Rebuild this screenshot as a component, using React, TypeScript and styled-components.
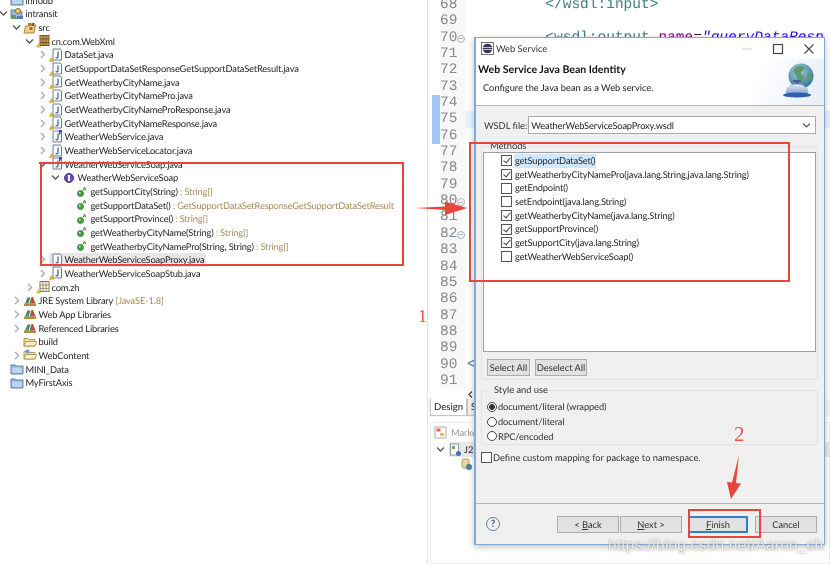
import React from 'react';
import styled, { createGlobalStyle } from 'styled-components';

const GlobalStyle = createGlobalStyle`
    html, body {
        margin: 0;
        padding: 0;
        background: #fff;
    }
`;

const UI_FONT = `Lato, "Open Sans", "Liberation Sans", sans-serif`;
const MONO_FONT = `"Liberation Mono", monospace`;

type IconKind = 'project' | 'src' | 'pkg' | 'pkgEmpty' | 'java' | 'javaWarn' | 'javaMark' | 'iface' | 'method' | 'lib' | 'folder' | 'folderDeco' | 'bluefolder';

type TreeItem = {
    depth: number;
    arrow?: 'open' | 'closed';
    icon: IconKind;
    label: string;
    suffix?: string;
    selected?: boolean;
};

const TREE: TreeItem[] = [
    { depth: 0, icon: 'bluefolder', label: 'innodb' },
    { depth: 0, arrow: 'open', icon: 'project', label: 'intransit' },
    { depth: 1, arrow: 'open', icon: 'src', label: 'src' },
    { depth: 2, arrow: 'open', icon: 'pkg', label: 'cn.com.WebXml' },
    { depth: 3, arrow: 'closed', icon: 'javaWarn', label: 'DataSet.java' },
    { depth: 3, arrow: 'closed', icon: 'javaWarn', label: 'GetSupportDataSetResponseGetSupportDataSetResult.java' },
    { depth: 3, arrow: 'closed', icon: 'javaWarn', label: 'GetWeatherbyCityName.java' },
    { depth: 3, arrow: 'closed', icon: 'javaWarn', label: 'GetWeatherbyCityNamePro.java' },
    { depth: 3, arrow: 'closed', icon: 'javaWarn', label: 'GetWeatherbyCityNameProResponse.java' },
    { depth: 3, arrow: 'closed', icon: 'javaWarn', label: 'GetWeatherbyCityNameResponse.java' },
    { depth: 3, arrow: 'closed', icon: 'javaMark', label: 'WeatherWebService.java' },
    { depth: 3, arrow: 'closed', icon: 'javaWarn', label: 'WeatherWebServiceLocator.java' },
    { depth: 3, arrow: 'open', icon: 'javaMark', label: 'WeatherWebServiceSoap.java' },
    { depth: 4, arrow: 'open', icon: 'iface', label: 'WeatherWebServiceSoap' },
    { depth: 5, icon: 'method', label: 'getSupportCity(String)', suffix: ' : String[]' },
    { depth: 5, icon: 'method', label: 'getSupportDataSet()', suffix: ' : GetSupportDataSetResponseGetSupportDataSetResult' },
    { depth: 5, icon: 'method', label: 'getSupportProvince()', suffix: ' : String[]' },
    { depth: 5, icon: 'method', label: 'getWeatherbyCityName(String)', suffix: ' : String[]' },
    { depth: 5, icon: 'method', label: 'getWeatherbyCityNamePro(String, String)', suffix: ' : String[]' },
    { depth: 3, arrow: 'closed', icon: 'java', label: 'WeatherWebServiceSoapProxy.java', selected: true },
    { depth: 3, arrow: 'closed', icon: 'javaWarn', label: 'WeatherWebServiceSoapStub.java' },
    { depth: 2, arrow: 'closed', icon: 'pkgEmpty', label: 'com.zh' },
    { depth: 1, arrow: 'closed', icon: 'lib', label: 'JRE System Library', suffix: ' [JavaSE-1.8]' },
    { depth: 1, arrow: 'closed', icon: 'lib', label: 'Web App Libraries' },
    { depth: 1, arrow: 'closed', icon: 'lib', label: 'Referenced Libraries' },
    { depth: 1, icon: 'folder', label: 'build' },
    { depth: 1, arrow: 'closed', icon: 'folderDeco', label: 'WebContent' },
    { depth: 0, icon: 'bluefolder', label: 'MINI_Data' },
    { depth: 0, icon: 'bluefolder', label: 'MyFirstAxis' },
];

const METHODS = [
    { label: 'getSupportDataSet()', checked: true, active: true },
    { label: 'getWeatherbyCityNamePro(java.lang.String,java.lang.String)', checked: true },
    { label: 'getEndpoint()', checked: false },
    { label: 'setEndpoint(java.lang.String)', checked: false },
    { label: 'getWeatherbyCityName(java.lang.String)', checked: true },
    { label: 'getSupportProvince()', checked: true },
    { label: 'getSupportCity(java.lang.String)', checked: true },
    { label: 'getWeatherWebServiceSoap()', checked: false },
];

const LINE_NUMBERS = Array.from({ length: 24 }, (_, i) => 68 + i);
const FOLD_LINES = [70, 80, 82];
const CHANGED_LINES = [74, 75, 76];

const TreeIcon = ({ kind }: { kind: IconKind }) => {
    switch (kind) {
        case 'project':
            return (
                <svg width="14" height="14" viewBox="0 0 14 14">
                    <path d="M1 3h5l1 1.500h5v7H1z" fill="#9fb9d6" stroke="#5c7fa6" />
                    <circle cx="8" cy="4" r="2.600" fill="#e6c35c" stroke="#8a7a40" />
                    <rect x="1" y="8" width="5" height="4" fill="#6d9a5c" />
                    <rect x="7" y="9" width="6" height="3" fill="#4f7fb8" />
                </svg>
            );
        case 'src':
            return (
                <svg width="14" height="14" viewBox="0 0 14 14">
                    <path d="M1 12l1.500-7h4l1-1h5l-1.500 8z" fill="#f0d08a" stroke="#b08a3e" />
                    <rect x="5" y="2" width="3" height="3" fill="#b5762e" />
                    <rect x="8.500" y="2" width="3" height="3" fill="#8a5a2a" />
                    <rect x="6.500" y="6" width="3" height="3" fill="#a86b2c" />
                </svg>
            );
        case 'pkg':
            return (
                <svg width="14" height="14" viewBox="0 0 14 14">
                    <rect x="4" y="1.500" width="9" height="10" fill="#c89a58" stroke="#7a5a2a" />
                    <path d="M4 5h9M4 8.500h9M7 1.500v10M10 1.500v10" stroke="#6b4a20" strokeWidth="0.800" />
                    <path d="M2.500 9l2.500 4.500H0z" fill="#e8b93a" />
                </svg>
            );
        case 'pkgEmpty':
            return (
                <svg width="14" height="14" viewBox="0 0 14 14">
                    <rect x="4" y="1.500" width="9" height="10" fill="#f4f1e6" stroke="#8a7a55" />
                    <path d="M4 5h9M4 8.500h9M7 1.500v10M10 1.500v10" stroke="#9a8a60" strokeWidth="0.800" />
                    <path d="M2.500 9l2.500 4.500H0z" fill="#e8b93a" />
                </svg>
            );
        case 'java':
        case 'javaWarn':
        case 'javaMark':
            return (
                <svg width="14" height="14" viewBox="0 0 14 14">
                    <path d="M4 1h7l1.500 1.500V12H4z" fill="#fdfdfd" stroke="#6d7f94" />
                    <path d="M9 3.500v5.300c0 1.300-1.800 1.300-2.300.4" fill="none" stroke="#3d5f96" strokeWidth="1.200" />
                    {kind === 'javaWarn' && <path d="M2.500 9l2.700 4.800H-.2z" fill="#e2ac2c" />}
                    {kind === 'javaMark' && <path d="M10 0h3v2.500h-1.600v2H10z" fill="#4a3fb0" />}
                </svg>
            );
        case 'iface':
            return (
                <svg width="14" height="14" viewBox="0 0 14 14">
                    <circle cx="7" cy="7" r="4.500" fill="#6a4fb0" stroke="#4a3490" />
                    <rect x="6" y="4" width="2" height="6" fill="#fff" />
                </svg>
            );
        case 'method':
            return (
                <svg width="14" height="14" viewBox="0 0 14 14">
                    <circle cx="5.500" cy="8.500" r="3" fill="#45a045" stroke="#2c7a2c" strokeWidth="0.800" />
                    <circle cx="4.700" cy="7.700" r="0.900" fill="#cfeccc" />
                    <path d="M9.500 2l1.500 3.500M9.500 2L8 5.500M8.500 4.200h2" stroke="#4a6a3a" strokeWidth="0.800" fill="none" />
                </svg>
            );
        case 'lib':
            return (
                <svg width="14" height="14" viewBox="0 0 14 14">
                    <rect x="1" y="9.500" width="12" height="2.500" fill="#b88a3c" />
                    <path d="M2 9.500l2.500-6h3l-2 6z" fill="#3f8a6b" />
                    <path d="M6.500 9.500l2-6.500h1.500l2.500 6.500z" fill="#b2533e" />
                </svg>
            );
        case 'folder':
        case 'folderDeco':
            return (
                <svg width="14" height="14" viewBox="0 0 14 14">
                    <path d="M1 3.500h4l1 1h6v6.500H1z" fill="#f1dca2" stroke="#b49a5c" />
                    <path d="M1 11l1.800-4.500H13.500L12 11z" fill="#fbeec6" stroke="#b49a5c" />
                    {kind === 'folderDeco' && <circle cx="4.500" cy="3.500" r="2" fill="#5a9ad0" />}
                </svg>
            );
        case 'bluefolder':
            return (
                <svg width="14" height="14" viewBox="0 0 14 14">
                    <path d="M1 3h4l1 1h7v8H1z" fill="#8fb6de" stroke="#5f86ae" />
                    <rect x="2" y="5.500" width="10" height="5.500" fill="#bcd6ef" />
                </svg>
            );
    }
};

const Chevron = ({ open }: { open: boolean }) => (
    <svg width="9" height="9" viewBox="0 0 9 9">
        {open
            ? <path d="M1 2.500l3.500 3.500L8 2.500" fill="none" stroke="#555" strokeWidth="1.300" />
            : <path d="M3 1l3.500 3.500L3 8" fill="none" stroke="#a8a8a8" strokeWidth="1.300" />}
    </svg>
);

const GlobeBell = () => (
    <svg width="34" height="36" viewBox="0 0 34 36">
        <defs>
            <radialGradient id="sea" cx="40%" cy="30%" r="75%">
                <stop offset="0" stopColor="#a8d0e0" />
                <stop offset="1" stopColor="#2f6f94" />
            </radialGradient>
            <linearGradient id="bell" x1="0" y1="0" x2="0" y2="1">
                <stop offset="0" stopColor="#e6eef8" />
                <stop offset="1" stopColor="#7fa0d0" />
            </linearGradient>
        </defs>
        <circle cx="20" cy="13" r="12.500" fill="url(#sea)" />
        <path d="M14 5c4-3 8-2 10 0-1 3-4 2-4 5s3 2 3 5-4 5-6 3 0-4-2-6-4-3-1-7zM27 10c2 0 4 3 4 6l-3 2c-2-3-3-6-1-8z" fill="#5f9a6a" />
        <path d="M12 17h8v2h-2.500v2.500h-3V19H12z" fill="#44618f" />
        <path d="M5 31c0-7 5-10 11-10s11 3 11 10z" fill="url(#bell)" stroke="#7f9ccb" strokeWidth="0.600" />
        <ellipse cx="16" cy="32" rx="14" ry="2.500" fill="#2f5faa" />
    </svg>
);

const EclipseLogo = () => (
    <svg width="13" height="13" viewBox="0 0 13 13">
        <rect x="0.500" y="0.500" width="12" height="12" fill="#fff" stroke="#777" />
        <circle cx="6.500" cy="6.500" r="4.800" fill="#3a3560" />
        <path d="M2 5.500h9M2 7.500h9" stroke="#fff" strokeWidth="0.700" />
    </svg>
);

const App = () => {
    return (
        <Screen>
            <GlobalStyle />
            <TreePane>
                {TREE.map(item => (
                    <TreeRow key={item.label} depth={item.depth}>
                        <ArrowSlot>
                            {item.arrow && <Chevron open={item.arrow === 'open'} />}
                        </ArrowSlot>
                        <TreeEntry selected={!!item.selected}>
                            <IconSlot><TreeIcon kind={item.icon} /></IconSlot>
                            <TreeLabel>{item.label}</TreeLabel>
                            {item.suffix && <TreeSuffix>{item.suffix}</TreeSuffix>}
                        </TreeEntry>
                    </TreeRow>
                ))}
            </TreePane>

            <EditorPane>
                <EditorLines>
                    {LINE_NUMBERS.map(n => (
                        <EditorLine key={n}>
                            <ChangeBar changed={CHANGED_LINES.includes(n)} />
                            <LineNumber>
                                {n}
                                {FOLD_LINES.includes(n) && <FoldMark />}
                            </LineNumber>
                            <LineCode current={n === 75}>
                                {n === 68 && <CodeIndent indent={9}><Tag>&lt;/wsdl:input&gt;</Tag></CodeIndent>}
                                {n === 70 && (
                                    <CodeIndent indent={9}>
                                        <Tag>&lt;wsdl:output</Tag> <Attr>name</Attr>=<AttrValue>"queryDataResp</AttrValue>
                                    </CodeIndent>
                                )}
                                {n === 90 && <CodeIndent indent={0}><Tag>&lt;</Tag></CodeIndent>}
                            </LineCode>
                        </EditorLine>
                    ))}
                </EditorLines>
                <ScrollRow>
                    <svg width="5" height="7" viewBox="0 0 5 7">
                        <path d="M4 .5L1 3.500 4 6.500" fill="none" stroke="#444" strokeWidth="1.300" />
                    </svg>
                </ScrollRow>
                <TabStrip>
                    <EditorTab active>Design</EditorTab>
                    <EditorTab>Se</EditorTab>
                </TabStrip>
                <MarkersView>
                    <MarkersTitle>
                        <svg width="13" height="13" viewBox="0 0 13 13">
                            <rect x="1" y="1" width="11" height="11" fill="#fff" stroke="#a9a9a9" />
                            <rect x="2.500" y="2.500" width="4" height="3" fill="#d96a5c" />
                            <rect x="6" y="7" width="4" height="3" fill="#e6c35c" />
                        </svg>
                        Marke
                    </MarkersTitle>
                    <MarkerRow>
                        <Chevron open />
                        <MarkerEntry>
                            <svg width="13" height="14" viewBox="0 0 13 14">
                                <rect x="1.500" y="1" width="8" height="11" fill="#fff" stroke="#8a9aa8" />
                                <rect x="3" y="3" width="3" height="3" fill="#6aa84f" />
                                <circle cx="9.500" cy="10.500" r="2.500" fill="#3f74b5" />
                            </svg>
                            J2E
                        </MarkerEntry>
                    </MarkerRow>
                    <MarkerChild>
                        <svg width="13" height="14" viewBox="0 0 13 14">
                            <rect x="2" y="2" width="7" height="9" rx="2" fill="#e8d9a0" stroke="#a89a60" />
                            <circle cx="9" cy="10" r="3" fill="#4a7fa8" />
                        </svg>
                    </MarkerChild>
                </MarkersView>
            </EditorPane>

            <Dialog>
                <TitleBar>
                    <EclipseLogo />
                    <TitleText>Web Service</TitleText>
                    <WindowControls>
                        <svg width="12" height="12" viewBox="0 0 12 12"><path d="M1 6h10" stroke="#cfcfcf" /></svg>
                        <svg width="12" height="12" viewBox="0 0 12 12"><rect x="1.500" y="1.500" width="9" height="9" fill="none" stroke="#444" strokeWidth="1.200" /></svg>
                        <svg width="12" height="12" viewBox="0 0 12 12"><path d="M1.500 1.500l9 9M10.500 1.500l-9 9" stroke="#444" strokeWidth="1.100" /></svg>
                    </WindowControls>
                </TitleBar>
                <BannerHeader>
                    <div>
                        <BannerTitle>Web Service Java Bean Identity</BannerTitle>
                        <BannerText>Configure the Java bean as a Web service.</BannerText>
                    </div>
                    <GlobeBell />
                </BannerHeader>
                <DialogBody>
                    <WsdlRow>
                        <span>WSDL file:</span>
                        <ComboBox>
                            WeatherWebServiceSoapProxy.wsdl
                            <svg width="9" height="9" viewBox="0 0 9 9">
                                <path d="M1 2.500l3.500 3.500L8 2.500" fill="none" stroke="#555" strokeWidth="1.100" />
                            </svg>
                        </ComboBox>
                    </WsdlRow>
                    <MethodsGroup>
                        <GroupLegend>Methods</GroupLegend>
                        <MethodList>
                            {METHODS.map(m => (
                                <MethodRow key={m.label}>
                                    <CheckBox checked={m.checked} />
                                    <MethodLabel active={!!m.active}>{m.label}</MethodLabel>
                                </MethodRow>
                            ))}
                        </MethodList>
                        <GroupButtons>
                            <SmallButton wide={false}>Select All</SmallButton>
                            <SmallButton wide>Deselect All</SmallButton>
                        </GroupButtons>
                    </MethodsGroup>
                    <StyleGroup>
                        <GroupLegend>Style and use</GroupLegend>
                        <RadioRow><Radio on />document/literal (wrapped)</RadioRow>
                        <RadioRow><Radio />document/literal</RadioRow>
                        <RadioRow><Radio />RPC/encoded</RadioRow>
                    </StyleGroup>
                    <MappingRow>
                        <CheckBox />
                        Define custom mapping for package to namespace.
                    </MappingRow>
                    <Footer>
                        <HelpButton>?</HelpButton>
                        <FooterButtons>
                            <WizardButton>&lt;&nbsp;<u>B</u>ack</WizardButton>
                            <WizardButton><u>N</u>ext&nbsp;&gt;</WizardButton>
                            <WizardButton primary><u>F</u>inish</WizardButton>
                            <WizardButton>Cancel</WizardButton>
                        </FooterButtons>
                    </Footer>
                </DialogBody>
            </Dialog>

            <RedBox left={40} top={162} width={364} height={104} />
            <RedBox left={469} top={142} width={321} height={140} />
            <RedBox left={688} top={509} width={73} height={29} />

            <ArrowDrawing left={414} top={200} width={54} height={16}>
                <path d="M1 8l30-1.500v-5L53 8 31 15v-5z" fill="#e8453c" />
            </ArrowDrawing>
            <ArrowDrawing left={726} top={454} width={16} height={46}>
                <path d="M13 1L10 29l5 .5L5 45 1 28l5 .5z" fill="#e8453c" />
            </ArrowDrawing>

            <RedNumeral left={418} top={307} size={18}>1</RedNumeral>
            <RedNumeral left={734} top={423} size={21}>2</RedNumeral>
            <Watermark>https://blog.csdn.net/Aaron_ch</Watermark>
        </Screen>
    );
};

const Screen = styled.div`
    position: relative;
    display: flex;
    width: 830px;
    height: 564px;
    overflow: hidden;
    background: #fff;
    font-family: ${UI_FONT};
    font-size: 9.3px;
    text-rendering: geometricPrecision;
    color: #222;
    filter: blur(0.3px);
`;

const TreePane = styled.div`
    width: 427px;
    flex: none;
    margin: -6.5px 0 0 -3.5px;
    padding-right: 3.5px;
    border-right: 1px solid #e4e4e4;
    box-sizing: content-box;
    overflow: hidden;
`;

const TreeRow = styled.div<{ depth: number }>`
    display: flex;
    align-items: center;
    height: 13.66px;
    padding-left: ${props => props.depth * 13}px;
    white-space: nowrap;
    letter-spacing: -0.16px;
`;

const ArrowSlot = styled.span`
    display: flex;
    align-items: center;
    justify-content: center;
    width: 13px;
    flex: none;
`;

const TreeEntry = styled.span<{ selected: boolean }>`
    display: flex;
    align-items: center;
    height: 13.66px;
    padding-right: ${props => props.selected ? '2px' : '0'};
    background: ${props => props.selected ? '#e6e6e6' : 'transparent'};
`;

const IconSlot = styled.span`
    display: flex;
    width: 16px;
    flex: none;
`;

const TreeLabel = styled.span`
    color: #1f1f1f;
`;

const TreeSuffix = styled.span`
    color: #a58d58;
    white-space: pre;
`;

const EditorPane = styled.div`
    flex: 1;
    min-width: 0;
    display: flex;
    flex-direction: column;
    margin-left: 0;
`;

const EditorLines = styled.div`
    margin-top: -3px;
    padding-left: 4px;
    overflow: hidden;
    flex: none;
`;

const EditorLine = styled.div`
    display: flex;
    height: 16.35px;
    font-family: ${MONO_FONT};
    font-size: 14.5px;
    line-height: 16.35px;
`;

const ChangeBar = styled.span<{ changed: boolean }>`
    width: 8px;
    flex: none;
    background: ${props => props.changed ? '#a3c8f5' : 'transparent'};
`;

const LineNumber = styled.span`
    position: relative;
    width: 25px;
    flex: none;
    box-sizing: border-box;
    color: #8a8a8a;
    background: #f8f8f8;
`;

const FoldMark = styled.i`
    position: absolute;
    right: 0;
    top: 5px;
    width: 6px;
    height: 6px;
    border: 1px solid #a9b4c4;
    border-radius: 50%;
    background: linear-gradient(#a9b4c4, #a9b4c4) center / 4px 1px no-repeat;
`;

const LineCode = styled.span<{ current: boolean }>`
    flex: 1;
    padding-left: 2px;
    white-space: pre;
    overflow: hidden;
    background: ${props => props.current ? '#e8f2fe' : 'transparent'};
`;

const CodeIndent = styled.span<{ indent: number }>`
    padding-left: ${props => props.indent * 8.7}px;
`;

const Tag = styled.span`
    color: #3f7f7f;
`;

const Attr = styled.span`
    color: #7f007f;
`;

const AttrValue = styled.span`
    color: #2a00ff;
    font-style: italic;
`;

const ScrollRow = styled.div`
    display: flex;
    align-items: center;
    height: 10px;
    flex: none;
    padding-left: 40px;
`;

const TabStrip = styled.div`
    display: flex;
    height: 18px;
    flex: none;
    padding-left: 2px;
    background: #f6f6f6;
    overflow: hidden;
`;

const EditorTab = styled.span<{ active?: boolean }>`
    padding: 3px 3px 0;
    height: 17px;
    box-sizing: border-box;
    font-size: 9.6px;
    background: ${props => props.active ? '#fff' : '#f0f0f0'};
    border: 1px solid #c4c4c4;
    border-top: none;
`;

const MarkersView = styled.div`
    margin: 5px 0 0 2px;
    border: 1px solid #ececec;
    border-radius: 4px 0 0 0;
    flex: 1;
`;

const MarkersTitle = styled.div`
    display: flex;
    align-items: center;
    gap: 4px;
    height: 18px;
    padding-left: 3px;
    color: #9a9a9a;
`;

const MarkerRow = styled.div`
    display: flex;
    align-items: center;
    gap: 4px;
    height: 15px;
    margin-top: 1px;
    padding-left: 5px;
`;

const MarkerEntry = styled.span`
    display: flex;
    align-items: center;
    gap: 2px;
    height: 15px;
    flex: 1;
    background: #e8e8e8;
`;

const MarkerChild = styled.div`
    display: flex;
    height: 15px;
    padding-left: 29px;
`;

const Dialog = styled.div`
    position: absolute;
    left: 474px;
    top: 37px;
    width: 351px;
    height: 508px;
    box-sizing: border-box;
    display: flex;
    flex-direction: column;
    background: #f0f0f0;
    border: 1px solid #7fa9d6;
    border-left-width: 2px;
    box-shadow: 0 2px 6px rgba(0, 0, 0, 0.25);
`;

const TitleBar = styled.div`
    display: flex;
    align-items: center;
    height: 21px;
    flex: none;
    padding-left: 5px;
    background: #fff;
`;

const TitleText = styled.span`
    margin-left: 2px;
    color: #333;
`;

const WindowControls = styled.div`
    display: flex;
    gap: 19px;
    margin-left: auto;
    padding-right: 9px;
`;

const BannerHeader = styled.div`
    display: flex;
    justify-content: space-between;
    height: 47px;
    flex: none;
    padding: 4px 9px 0 2px;
    box-sizing: border-box;
    background: linear-gradient(115deg, #fff 78%, #e6edf7 100%);
    border-bottom: 1px solid #b4b4b4;
`;

const BannerTitle = styled.div`
    font-weight: 700;
    font-size: 10.6px;
    line-height: 15px;
    color: #111;
`;

const BannerText = styled.div`
    margin: 3px 0 0 5px;
    line-height: 14px;
`;

const DialogBody = styled.div`
    flex: 1;
    display: flex;
    flex-direction: column;
    min-height: 0;
`;

const WsdlRow = styled.div`
    display: flex;
    align-items: center;
    gap: 1px;
    height: 18px;
    margin: 10px 8px 0 8px;
    color: #333;
`;

const ComboBox = styled.div`
    flex: 1;
    height: 18px;
    box-sizing: border-box;
    display: flex;
    align-items: center;
    justify-content: space-between;
    padding: 0 4px 0 2px;
    background: #fff;
    border: 1px solid #a9a9a9;
    color: #222;
    letter-spacing: -0.16px;
`;

const MethodsGroup = styled.fieldset`
    width: 337px;
    height: 240px;
    box-sizing: border-box;
    margin: 6px 0 0 5px;
    padding: 0 1px;
    border: 1px solid #e2e2e2;
    border-radius: 2px;
    min-width: 0;
`;

const GroupLegend = styled.legend`
    margin-left: 6px;
    padding: 0 1px;
    line-height: 12px;
    color: #333;
`;

const MethodList = styled.div`
    height: 200px;
    box-sizing: border-box;
    padding: 1px 0 0 17px;
    background: #fff;
    border: 1px solid #a0a0a0;
`;

const MethodRow = styled.div`
    display: flex;
    align-items: center;
    gap: 2px;
    height: 13.66px;
    letter-spacing: -0.14px;
`;

const MethodLabel = styled.span<{ active: boolean }>`
    padding: 0 1px;
    line-height: 13.66px;
    background: ${props => props.active ? '#cde8ff' : 'transparent'};
    color: #1f1f1f;
`;

const CheckBox = styled.span<{ checked?: boolean }>`
    position: relative;
    display: inline-block;
    width: 9px;
    height: 9px;
    flex: none;
    background: #fff;
    border: 1px solid #555;
    ${props => props.checked && `
        &::after {
            content: '';
            position: absolute;
            left: 2.500px;
            top: 0;
            width: 3px;
            height: 6px;
            border: solid #444;
            border-width: 0 1.300px 1.300px 0;
            transform: rotate(40deg);
        }
    `}
`;

const GroupButtons = styled.div`
    display: flex;
    gap: 5px;
    margin: 7px 0 0 4px;
`;

const SmallButton = styled.span<{ wide: boolean }>`
    display: flex;
    align-items: center;
    justify-content: center;
    width: ${props => props.wide ? '52px' : '43px'};
    height: 17px;
    box-sizing: border-box;
    background: #e1e1e1;
    border: 1px solid #adadad;
    color: #333;
`;

const StyleGroup = styled.fieldset`
    width: 337px;
    height: 61px;
    box-sizing: border-box;
    margin: 4px 0 0 5px;
    padding: 3.5px 0 0 5px;
    border: 1px solid #e2e2e2;
    border-radius: 2px;
    min-width: 0;
`;

const RadioRow = styled.div`
    display: flex;
    align-items: center;
    gap: 1px;
    height: 14.8px;
    color: #333;
    letter-spacing: -0.1px;
`;

const Radio = styled.span<{ on?: boolean }>`
    width: 8px;
    height: 8px;
    flex: none;
    border: 1px solid #444;
    border-radius: 50%;
    background: ${props => props.on ? 'radial-gradient(circle, #333 0 2.600px, #fff 3.100px)' : '#fff'};
`;

const MappingRow = styled.div`
    display: flex;
    align-items: center;
    gap: 1px;
    height: 14px;
    margin: 5px 0 0 5px;
    color: #333;
`;

const Footer = styled.div`
    display: flex;
    align-items: center;
    justify-content: space-between;
    height: 41px;
    flex: none;
    margin-top: auto;
    padding: 0 7px 0 10px;
    box-sizing: border-box;
    border-top: 1px solid #b4b4b4;
`;

const HelpButton = styled.span`
    display: flex;
    align-items: center;
    justify-content: center;
    width: 12px;
    height: 12px;
    border: 1px solid #5f7f9f;
    border-radius: 50%;
    color: #47688a;
    font-size: 10px;
    font-weight: 700;
`;

const FooterButtons = styled.div`
    display: flex;
`;

const WizardButton = styled.span<{ primary?: boolean }>`
    display: flex;
    align-items: center;
    justify-content: center;
    width: ${props => props.primary ? '60px' : '62px'};
    height: 17px;
    box-sizing: border-box;
    margin: ${props => props.primary ? '0 6px' : '0 0 0 1px'};
    background: #e1e1e1;
    border: ${props => props.primary ? '2px solid #2f7fd0' : '1px solid #adadad'};
    color: #333;
`;

const RedBox = styled.div<{ left: number; top: number; width: number; height: number }>`
    position: absolute;
    left: ${props => props.left}px;
    top: ${props => props.top}px;
    width: ${props => props.width}px;
    height: ${props => props.height}px;
    box-sizing: border-box;
    border: 2px solid #e8453c;
`;

const ArrowDrawing = styled.svg.attrs<{ width: number; height: number }>(props => ({
    viewBox: `0 0 ${props.width} ${props.height}`,
}))<{ left: number; top: number; width: number; height: number }>`
    position: absolute;
    left: ${props => props.left}px;
    top: ${props => props.top}px;
`;

const RedNumeral = styled.span<{ left: number; top: number; size: number }>`
    position: absolute;
    left: ${props => props.left}px;
    top: ${props => props.top}px;
    font-family: "Liberation Serif", serif;
    font-size: ${props => props.size}px;
    line-height: 1.1;
    color: #e8564c;
`;

const Watermark = styled.span`
    position: absolute;
    left: 608px;
    top: 537px;
    font-family: "Liberation Sans", sans-serif;
    font-size: 15.500px;
    letter-spacing: 0.2px;
    line-height: 18px;
    color: rgba(255, 255, 255, 0.75);
    text-shadow: 0 0 2px rgba(110, 110, 110, 0.8);
    white-space: nowrap;
`;

export default App;
